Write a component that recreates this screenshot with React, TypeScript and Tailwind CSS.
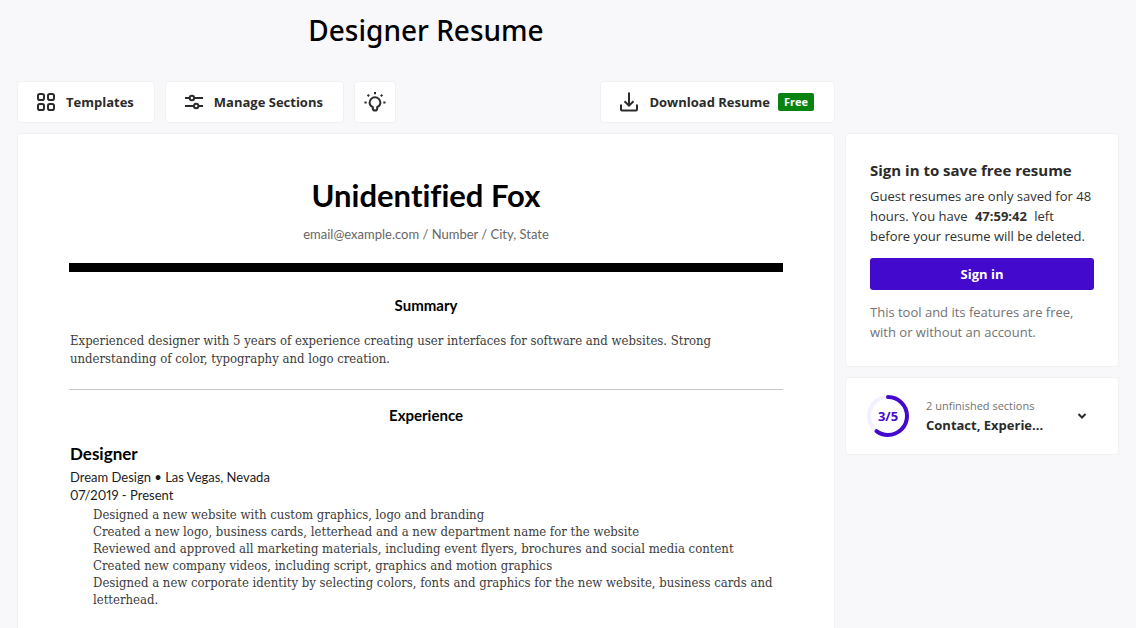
import React from "react";

const card = "rounded-[4px] border border-[#f1f1f4] bg-white";

function GridIcon() {
  return (
    <svg width="20" height="20" viewBox="0 0 20 20" fill="none" stroke="#2b2b2b" strokeWidth="2" aria-hidden="true">
      <rect x="2" y="2" width="6" height="6" rx="1.8" />
      <rect x="12" y="2" width="6" height="6" rx="1.8" />
      <rect x="2" y="12" width="6" height="6" rx="1.8" />
      <rect x="12" y="12" width="6" height="6" rx="1.8" />
    </svg>
  );
}

function SlidersIcon() {
  return (
    <svg width="20" height="20" viewBox="0 0 20 20" fill="none" stroke="#2b2b2b" strokeWidth="2" aria-hidden="true">
      <path d="M1 6h4.500M10.200 6H19M1 14h8.800M14.500 14H19" />
      <circle cx="7.9" cy="6" r="2.2" />
      <circle cx="12.2" cy="14" r="2.2" />
    </svg>
  );
}

function BulbIcon() {
  return (
    <svg width="24" height="24" viewBox="0 0 24 24" fill="none" stroke="#2b2b2b" strokeWidth="2" aria-hidden="true">
      <path d="M9.800 18.500V17.200C8 16.200 6.600 14.800 6.600 12.700a5.400 5.400 0 0 1 10.800 0C17.400 14.800 16 16.200 14.200 17.200v1.300c0 1.500-.6 2.100-2.200 2.100s-2.200-.6-2.200-2.100z" />
      <path d="M12 2v2.200M1.500 12.500h2.200M20.300 12.500h2.200M4.600 4.800l1.500 1.500M19.400 4.800l-1.500 1.500" />
    </svg>
  );
}

function DownloadIcon() {
  return (
    <svg width="20" height="20" viewBox="0 0 20 20" fill="none" stroke="#2b2b2b" strokeWidth="2" aria-hidden="true">
      <path d="M10 .5v13M5.500 9.200l4.500 4.500 4.500-4.500M2 12.500v5a1 1 0 0 0 1 1h14a1 1 0 0 0 1-1v-5" />
    </svg>
  );
}

function ProgressRing({ done, total }: { done: number; total: number }) {
  const radius = 19;
  const length = 2 * Math.PI * radius;
  return (
    <span className="grid size-[42px] shrink-0 place-items-center">
      <svg className="col-start-1 row-start-1" width="42" height="42" viewBox="0 0 42 42" fill="none" strokeWidth="4" aria-hidden="true">
        <circle cx="21" cy="21" r={radius} stroke="#f3effe" />
        <circle
          cx="21"
          cy="21"
          r={radius}
          stroke="#430acd"
          strokeLinecap="round"
          strokeDasharray={`${(length * done) / total} ${length}`}
          transform="rotate(-90 21 21)"
        />
      </svg>
      <span className="col-start-1 row-start-1 text-[13px] leading-5 font-bold text-[#430acd]">
        {done}/{total}
      </span>
    </span>
  );
}

const duties = [
  "Designed a new website with custom graphics, logo and branding",
  "Created a new logo, business cards, letterhead and a new department name for the website",
  "Reviewed and approved all marketing materials, including event flyers, brochures and social media content",
  "Created new company videos, including script, graphics and motion graphics",
  "Designed a new corporate identity by selecting colors, fonts and graphics for the new website, business cards and letterhead.",
];

function Toolbar() {
  const button = `${card} flex h-[42px] items-center text-[13px] leading-5 font-bold text-[#2b2b2b]`;
  return (
    <div className="flex gap-2.5">
      <button type="button" className={`${button} gap-2.5 pr-5 pl-[18px]`}>
        <GridIcon />
        Templates
      </button>
      <button type="button" className={`${button} gap-2.5 pr-5 pl-[18px]`}>
        <SlidersIcon />
        Manage Sections
      </button>
      <button type="button" aria-label="Tips" className={`${button} w-[42px] justify-center`}>
        <BulbIcon />
      </button>
      <button type="button" className={`${button} ml-auto gap-2.5 pr-5 pl-[18px]`}>
        <DownloadIcon />
        Download Resume
        <span className="-ml-0.5 rounded-[2px] bg-[#078410] px-1.5 text-[11px] leading-[18px] text-white">Free</span>
      </button>
    </div>
  );
}

function Paper() {
  return (
    <article className="grow rounded-t-[4px] border border-b-0 border-[#f1f1f4] bg-white px-[51px] pt-[41px] font-['Lato',sans-serif] text-black proportional-nums [font-variant-ligatures:no-common-ligatures]">
      <h2 className="text-center text-[31px] leading-10 font-bold">Unidentified Fox</h2>
      <p className="mt-2.5 text-center text-[13px] leading-[18px] text-[#666]">email@example.com / Number / City, State</p>
      <hr className="mt-5 h-[9px] border-0 bg-black" />
      <h3 className="mt-[23px] text-center text-[15px] leading-5 font-bold">Summary</h3>
      <p className="mt-[17px] px-px pr-12 font-['DejaVu_Serif_Condensed','DejaVu_Serif',serif] text-[13px] leading-[18px] text-[#3c3c3c]">
        Experienced designer with 5 years of experience creating user interfaces for software and websites. Strong
        understanding of color, typography and logo creation.
      </p>
      <hr className="mt-[21px] border-[#c8c8c8]" />
      <h3 className="mt-[15px] text-center text-[15px] leading-5 font-bold">Experience</h3>
      <section className="mt-[19px] px-px">
        <h4 className="text-[17px] leading-5 font-bold">Designer</h4>
        <p className="mt-1 text-[13px] leading-[18px] text-[#1c1c1c]">Dream Design • Las Vegas, Nevada</p>
        <p className="text-[13px] leading-[18px] text-[#1c1c1c]">07/2019 - Present</p>
        <ul className="mt-0.5 pl-[23px] font-['DejaVu_Serif_Condensed','DejaVu_Serif',serif] text-[13px] leading-[17px] text-[#3c3c3c]">
          {duties.map((duty) => (
            <li key={duty}>{duty}</li>
          ))}
        </ul>
      </section>
    </article>
  );
}

function Sidebar() {
  return (
    <aside className="flex flex-col gap-2.5">
      <section className={`${card} px-6 py-6 text-[13px] leading-5`}>
        <h2 className="mt-0.5 text-[15px] leading-5 font-bold text-[#2b2b2b]">Sign in to save free resume</h2>
        <p className="mt-1.5 text-[#2f2f2f]">
          Guest resumes are only saved for 48 hours. You have <strong className="mx-1 inline-block">47:59:42</strong>{" "}
          left before your resume will be deleted.
        </p>
        <button type="button" className="mt-3 h-8 w-full rounded-[3px] bg-[#430acd] font-bold text-white">
          Sign in
        </button>
        <p className="mt-3 text-[#737373]">This tool and its features are free, with or without an account.</p>
      </section>
      <button type="button" className={`${card} flex h-[78px] items-center pr-[31px] pl-[21px] text-left`}>
        <ProgressRing done={3} total={5} />
        <span className="ml-[17px]">
          <span className="block text-[11px] leading-[18px] text-[#737373]">2 unfinished sections</span>
          <span className="block text-[13px] leading-5 font-bold text-[#2b2b2b]">Contact, Experie...</span>
        </span>
        <svg className="ml-auto" width="10" height="8" viewBox="0 0 10 8" fill="none" stroke="#2b2b2b" strokeWidth="2" aria-hidden="true">
          <path d="M1.500 2L5 5.500 8.500 2" />
        </svg>
      </button>
    </aside>
  );
}

export default function App() {
  return (
    <div className="grid min-h-screen grid-cols-[minmax(0,1fr)_274px] grid-rows-[auto_1fr] gap-x-2.5 bg-[#f8f8fb] px-[17px] font-['Open_Sans','Noto_Sans',sans-serif]">
      <header>
        <h1 className="pt-2.5 text-center font-['Noto_Sans',sans-serif] text-[28px] leading-10 font-medium text-black">
          Designer Resume
        </h1>
        <div className="mt-[31px] mb-2.5">
          <Toolbar />
        </div>
      </header>
      <main className="col-start-1 row-start-2 flex flex-col">
        <Paper />
      </main>
      <div className="col-start-2 row-start-2">
        <Sidebar />
      </div>
    </div>
  );
}
